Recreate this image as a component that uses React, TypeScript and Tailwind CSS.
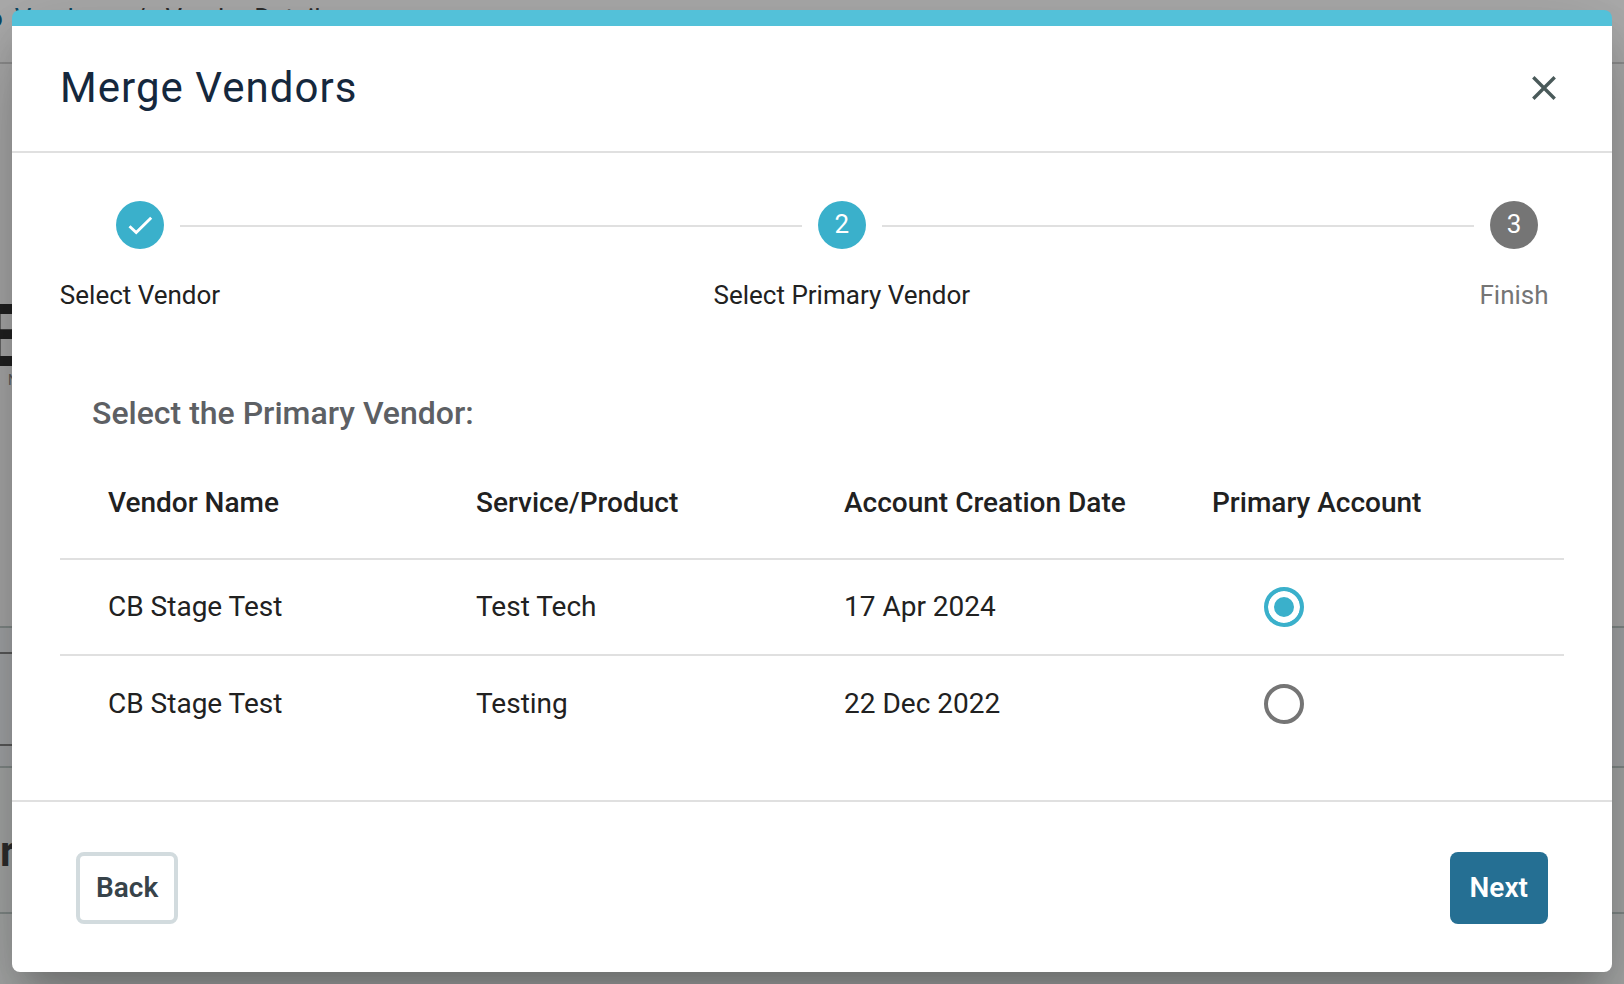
import { useState } from "react";

const steps = [
  { label: "Select Vendor", state: "done" },
  { label: "Select Primary Vendor", state: "active" },
  { label: "Finish", state: "upcoming" },
];

const vendors = [
  { id: "v1", name: "CB Stage Test", service: "Test Tech", created: "17 Apr 2024" },
  { id: "v2", name: "CB Stage Test", service: "Testing", created: "22 Dec 2022" },
];

// Page that sits behind the dialog
function BackgroundPage() {
  return (
    <div aria-hidden="true" className="absolute inset-0 flex flex-col overflow-hidden bg-white">
      <div className="flex h-16 gap-5 border-b-2 border-[#d4d4d4] pl-3 text-[26px] leading-9 text-[#444]">
        <span className="-ml-6 text-[#0f6b95]">o</span>
        <span className="-ml-2 text-[#0f6b95]">Vendors</span>
        <span className="ml-1">/</span>
        <span>Vendor Details</span>
      </div>
      <div className="h-[564px] border-b-2 border-[#c3cfcc] pt-[236px]">
        <div className="-ml-[18px] text-[88px] leading-[72px] font-bold text-[#333]">E</div>
        <div className="ml-2 text-sm leading-4 text-[#888]">N</div>
      </div>
      <div className="h-[140px] border-b-2 border-[#c3cfcc] bg-[#f7f9fd] pt-6">
        <div className="h-[94px] w-10 border-y-2 border-[#888]" />
      </div>
      <div className="h-[146px] border-b-2 border-[#c3cfcc] bg-[#fafdfb] pt-[60px]">
        <span className="text-[42px] leading-[48px] font-bold text-[#444]">r</span>
      </div>
      <div className="flex-1 bg-[#fafdfb]" />
    </div>
  );
}

function StepIcon({ index, state }: { index: number; state: string }) {
  return (
    <span
      className={`flex size-12 items-center justify-center rounded-full text-[26px] leading-8 text-white ${
        state === "upcoming" ? "bg-[#757575]" : "bg-[#3ab0cb]"
      }`}
    >
      {state === "done" ? (
        <svg viewBox="0 0 48 48" className="size-12" fill="none" stroke="currentColor" strokeWidth="2.9">
          <path d="M13.5 25.2 20.2 31.6 35.2 16.8" />
        </svg>
      ) : (
        <span className="pb-[2px]">{index + 1}</span>
      )}
    </span>
  );
}

function Step({ index }: { index: number }) {
  const { label, state } = steps[index];
  return (
    <li className="flex w-12 flex-col items-center" aria-current={state === "active" ? "step" : undefined}>
      <StepIcon index={index} state={state} />
      <span
        className={`mt-[30px] text-[26px] leading-8 whitespace-nowrap ${
          state === "upcoming" ? "text-[#757575]" : "text-[#212121]"
        }`}
      >
        {label}
      </span>
    </li>
  );
}

export default function App() {
  const [primary, setPrimary] = useState("v1");

  return (
    <div className="relative min-h-screen font-['Roboto',sans-serif] text-[#212121]">
      <BackgroundPage />
      <div className="absolute inset-0 bg-black/32" />

      <div className="relative px-3 pt-[10px] pb-3">
        <div
          role="dialog"
          aria-labelledby="merge-title"
          className="overflow-hidden rounded-lg border-t-16 border-[#53c1d9] bg-white shadow-[0_22px_30px_-14px_rgba(0,0,0,0.2),0_48px_76px_6px_rgba(0,0,0,0.14),0_18px_92px_16px_rgba(0,0,0,0.12)]"
        >
          <header className="flex items-end justify-between border-b-2 border-[#e0e0e0] px-12 pt-[34px] pb-[35px]">
            <h1 id="merge-title" className="text-[42px] leading-14 tracking-wide text-[#15283d]">
              Merge Vendors
            </h1>
            <button type="button" aria-label="Close" className="flex h-14 w-10 items-center justify-center text-[#4a5a5a]">
              <svg viewBox="0 0 24 24" className="size-6" fill="none" stroke="currentColor" strokeWidth="3.4">
                <path d="M1.3 1.3 22.7 22.7M22.7 1.3 1.3 22.7" />
              </svg>
            </button>
          </header>

          <ol className="flex items-start pt-12 pr-[74px] pl-[104px]">
            <Step index={0} />
            <li aria-hidden="true" className="mx-4 mt-6 h-[2px] grow-21 basis-0 bg-[#e0e0e0]" />
            <Step index={1} />
            <li aria-hidden="true" className="mx-4 mt-6 h-[2px] grow-20 basis-0 bg-[#e0e0e0]" />
            <Step index={2} />
          </ol>

          <main className="px-12 pb-[49px]">
            <h2 className="mt-[82px] mb-[14px] pl-8 text-[32px] leading-10 font-medium text-[#5d6064]">
              Select the Primary Vendor:
            </h2>
            <table className="w-full table-fixed text-left text-[28px] leading-9">
              <thead>
                <tr className="h-28 border-b-2 border-[#e0e0e0]">
                  <th className="w-104 pl-12 font-medium">Vendor Name</th>
                  <th className="w-92 font-medium">Service/Product</th>
                  <th className="w-92 font-medium">Account Creation Date</th>
                  <th className="font-medium">Primary Account</th>
                </tr>
              </thead>
              <tbody>
                {vendors.map((v) => (
                  <tr key={v.id} className="h-24 border-b-2 border-[#e0e0e0] last:border-b-0">
                    <td className="pl-12">{v.name}</td>
                    <td>{v.service}</td>
                    <td>{v.created}</td>
                    <td className="pl-13">
                      <input
                        type="radio"
                        name="primary"
                        aria-label={`${v.name}, ${v.service}`}
                        checked={primary === v.id}
                        onChange={() => setPrimary(v.id)}
                        className="block size-10 appearance-none rounded-full border-4 border-[#757575] checked:border-[#3ab0cb] checked:bg-[#3ab0cb] checked:shadow-[inset_0_0_0_6px_#fff]"
                      />
                    </td>
                  </tr>
                ))}
              </tbody>
            </table>
          </main>

          <footer className="flex items-center justify-between border-t-2 border-[#e0e0e0] px-16 pt-[50px] pb-12">
            <button
              type="button"
              className="h-18 rounded-lg border-4 border-[#d2dbde] px-4 text-[28px] leading-9 font-semibold text-[#37434a]"
            >
              Back
            </button>
            <button type="button" className="h-18 rounded-lg bg-[#256f93] px-5 text-[28px] leading-9 font-semibold text-white">
              Next
            </button>
          </footer>
        </div>
      </div>
    </div>
  );
}
